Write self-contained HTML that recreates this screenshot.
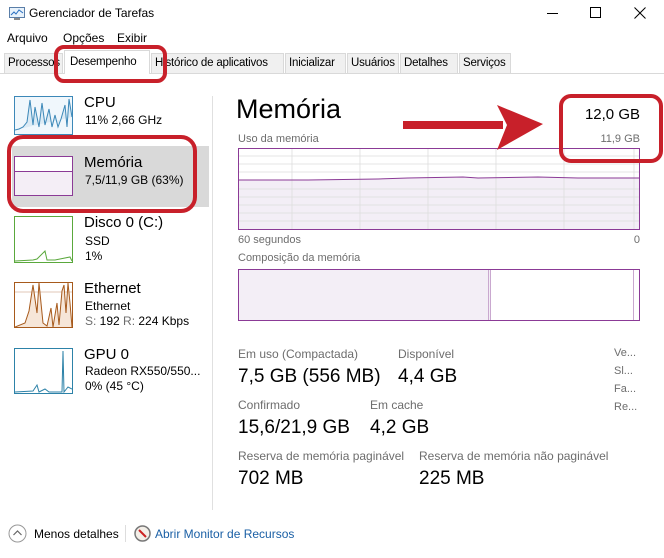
<!DOCTYPE html>
<html><head><meta charset="utf-8"><style>
*{margin:0;padding:0;box-sizing:border-box}
body{width:664px;height:558px;background:#fff;font-family:"Liberation Sans","DejaVu Sans",sans-serif;color:#000;position:relative;overflow:hidden;font-size:12px}
.a{position:absolute;white-space:nowrap}
.g{color:#6d6d6d}
.tab{position:absolute;top:53px;height:20px;border:1px solid #d9d9d9;border-bottom:none;background:#f0f0f0;font-size:11.5px;letter-spacing:-0.2px;padding:3px 0 0 3px;color:#000;overflow:hidden;white-space:nowrap}
.th{position:absolute;left:14px;width:59px;border:1px solid}
.big{font-size:19px}
.lbl{font-size:12px;color:#6d6d6d}
</style></head><body>
<!-- title -->
<svg class="a" style="left:8px;top:6px" width="18" height="15"><rect x="1.5" y="1.5" width="15" height="10" fill="#e8f2fb" stroke="#5a7ea8"/><polyline points="3,9 6,6 8,8 11,4 15,7" fill="none" stroke="#2a6fc0"/><rect x="6" y="12" width="6" height="2" fill="#888"/></svg>
<div class="a" style="left:29px;top:6px;font-size:12px">Gerenciador de Tarefas</div>
<div class="a" style="left:547px;top:13px;width:11px;height:1px;background:#000"></div>
<div class="a" style="left:590px;top:7px;width:11px;height:11px;border:1px solid #000"></div>
<svg class="a" style="left:634px;top:7px" width="12" height="12"><path d="M0.5 0.5L11.5 11.5M11.5 0.5L0.5 11.5" stroke="#000"/></svg>
<!-- menu -->
<div class="a" style="left:7px;top:31px">Arquivo</div>
<div class="a" style="left:63px;top:31px">Opções</div>
<div class="a" style="left:117px;top:31px">Exibir</div>
<!-- tabs -->
<div class="a" style="left:0;top:73px;width:664px;height:1px;background:#d9d9d9"></div>
<div class="tab" style="left:4px;width:59px">Processos</div>
<div class="tab" style="left:64px;width:86px;top:50px;height:24px;background:#fff;padding-top:5px;padding-left:5px">Desempenho</div>
<div class="tab" style="left:151px;width:133px">Histórico de aplicativos</div>
<div class="tab" style="left:285px;width:61px">Inicializar</div>
<div class="tab" style="left:347px;width:52px">Usuários</div>
<div class="tab" style="left:400px;width:58px">Detalhes</div>
<div class="tab" style="left:459px;width:52px">Serviços</div>
<!-- left panel -->
<div class="a" style="left:12px;top:146px;width:197px;height:61px;background:#d9d9d9"></div>
<div class="a" style="left:212px;top:96px;width:1px;height:414px;background:#e0e0e0"></div>
<svg class="th" style="top:96px;height:39px;border-color:#3c88b8;background:#f0f7fc" viewBox="0 0 57 37" preserveAspectRatio="none"><polyline points="0,33 4,32 8,30 12,25 15,3 18,28 20,10 24,30 27,6 30,28 34,12 37,30 40,18 43,30 46,22 50,8 52,30 54,2 57,20" fill="#dcebf5" stroke="#3c88b8"/></svg>
<div class="a" style="left:84px;top:94px;font-size:15px">CPU</div>
<div class="a" style="left:85px;top:113px">11% 2,66 GHz</div>
<div class="th" style="top:156px;height:40px;border-color:#8b3a96;background:#fff"><div style="position:absolute;left:0;right:0;top:14px;bottom:0;background:#f4eef6;border-top:1px solid #8b3a96"></div></div>
<div class="a" style="left:84px;top:154px;font-size:15px">Memória</div>
<div class="a" style="left:85px;top:173px">7,5/11,9 GB (63%)</div>
<svg class="th" style="top:216px;height:47px;border-color:#5aa83c" viewBox="0 0 57 45" preserveAspectRatio="none"><polyline points="0,44 18,43 22,42 30,34 32,43 40,43 55,40 57,44" fill="none" stroke="#5aa83c"/></svg>
<div class="a" style="left:84px;top:214px;font-size:15px">Disco 0 (C:)</div>
<div class="a" style="left:85px;top:234px">SSD</div>
<div class="a" style="left:85px;top:249px">1%</div>
<svg class="th" style="top:282px;height:46px;border-color:#a75a1c;background:#fff" viewBox="0 0 57 44" preserveAspectRatio="none"><line x1="0" y1="9" x2="57" y2="9" stroke="#c49070" stroke-width=".6"/><polyline points="0,44 10,40 14,28 18,2 22,30 24,0 28,40 32,43 36,25 38,44 42,20 44,42 47,8 49,2 51,30 53,0 55,20 57,44" fill="#f6e6d8" stroke="#a75a1c"/></svg>
<div class="a" style="left:84px;top:280px;font-size:15px">Ethernet</div>
<div class="a" style="left:85px;top:299px">Ethernet</div>
<div class="a" style="left:85px;top:314px"><span class="g">S:</span> 192 <span class="g">R:</span> 224 Kbps</div>
<svg class="th" style="top:348px;height:46px;border-color:#2d82a8" viewBox="0 0 57 44" preserveAspectRatio="none"><polyline points="0,43 18,42 22,36 24,43 30,40 34,43 47,43 48,2 49,43 53,38 57,40" fill="none" stroke="#2d82a8"/></svg>
<div class="a" style="left:84px;top:346px;font-size:15px">GPU 0</div>
<div class="a" style="left:85px;top:364px">Radeon RX550/550...</div>
<div class="a" style="left:85px;top:379px">0% (45 °C)</div>
<!-- right -->
<div class="a" style="left:236px;top:94px;font-size:27px">Memória</div>
<div class="a" style="right:24px;top:106px;font-size:15px">12,0 GB</div>
<div class="a lbl" style="left:238px;top:133px;font-size:11px">Uso da memória</div>
<div class="a lbl" style="right:24px;top:133px;font-size:11px">11,9 GB</div>
<svg class="a" style="left:238px;top:148px" width="402" height="82">
<rect x="0" y="0" width="402" height="82" fill="#fff"/>
<path d="M0 32 L70 32 L140 31 L170 30 L225 29 L240 30 L300 29 L340 30 L402 30 L402 82 L0 82Z" fill="#f3eef6"/>
<g stroke="#ddd" stroke-width=".8">
<line x1="0" y1="8" x2="402" y2="8"/><line x1="0" y1="16" x2="402" y2="16"/><line x1="0" y1="24" x2="402" y2="24"/><line x1="0" y1="41" x2="402" y2="41"/><line x1="0" y1="49" x2="402" y2="49"/><line x1="0" y1="57" x2="402" y2="57"/><line x1="0" y1="65" x2="402" y2="65"/><line x1="0" y1="73" x2="402" y2="73"/>
<line x1="54" y1="0" x2="54" y2="82"/><line x1="122" y1="0" x2="122" y2="82"/><line x1="190" y1="0" x2="190" y2="82"/><line x1="258" y1="0" x2="258" y2="82"/><line x1="326" y1="0" x2="326" y2="82"/><line x1="396" y1="0" x2="396" y2="82"/></g>
<polyline points="0,32 70,32 140,31 170,30 225,29 240,30 300,29 340,30 402,30" fill="none" stroke="#8b3a96"/>
<rect x=".5" y=".5" width="401" height="81" fill="none" stroke="#8b3a96"/></svg>
<div class="a lbl" style="left:238px;top:234px;font-size:11px">60 segundos</div>
<div class="a lbl" style="right:24px;top:234px;font-size:11px">0</div>
<div class="a lbl" style="left:238px;top:252px;font-size:11px">Composição da memória</div>
<div class="a" style="left:238px;top:269px;width:402px;height:52px;border:1px solid #8b3a96;background:#fff">
<div style="position:absolute;left:0;top:0;width:252px;height:50px;background:#f3eef6;border-right:3px double #c9a8cf"></div>
<div style="position:absolute;left:394px;top:0;width:1px;height:50px;background:#c9a8cf"></div></div>
<div class="a lbl" style="left:238px;top:347px">Em uso (Compactada)</div>
<div class="a lbl" style="left:398px;top:347px">Disponível</div>
<div class="a big" style="left:238px;top:366px">7,5 GB (556 MB)</div>
<div class="a big" style="left:398px;top:366px">4,4 GB</div>
<div class="a lbl" style="left:238px;top:398px">Confirmado</div>
<div class="a lbl" style="left:370px;top:398px">Em cache</div>
<div class="a big" style="left:238px;top:417px">15,6/21,9 GB</div>
<div class="a big" style="left:370px;top:417px">4,2 GB</div>
<div class="a lbl" style="left:238px;top:449px">Reserva de memória paginável</div>
<div class="a lbl" style="left:419px;top:449px">Reserva de memória não paginável</div>
<div class="a big" style="left:238px;top:468px">702 MB</div>
<div class="a big" style="left:419px;top:468px">225 MB</div>
<div class="a lbl" style="left:614px;top:347px;font-size:11px">Ve...</div>
<div class="a lbl" style="left:614px;top:365px;font-size:11px">Sl...</div>
<div class="a lbl" style="left:614px;top:383px;font-size:11px">Fa...</div>
<div class="a lbl" style="left:614px;top:401px;font-size:11px">Re...</div>
<!-- bottom -->
<svg class="a" style="left:8px;top:524px" width="19" height="19"><circle cx="9.5" cy="9.5" r="8.5" fill="#fff" stroke="#999"/><polyline points="5.5,11 9.5,7 13.5,11" fill="none" stroke="#666" stroke-width="1.2"/></svg>
<div class="a" style="left:34px;top:527px">Menos detalhes</div>
<div class="a" style="left:125px;top:525px;width:1px;height:17px;background:#ddd"></div>
<svg class="a" style="left:134px;top:525px" width="17" height="17"><circle cx="8.5" cy="8.5" r="7.5" fill="#f3efe8" stroke="#777" stroke-width="1.5"/><line x1="5" y1="5" x2="12" y2="12" stroke="#c22" stroke-width="2"/></svg>
<div class="a" style="left:155px;top:527px;color:#1a5fa5">Abrir Monitor de Recursos</div>
<!-- annotations -->
<svg class="a" style="left:0;top:0" width="664" height="558">
<g fill="none" stroke="#c8202a" stroke-width="4">
<rect x="56" y="47" width="109" height="34" rx="8"/>
<rect x="9" y="137" width="186" height="74" rx="14"/>
<rect x="561" y="96" width="100" height="65" rx="10"/></g>
<rect x="403" y="121" width="100" height="8" fill="#c8202a"/>
<polygon points="497,105 543,124 497,150 507,125" fill="#c8202a"/>
</svg>
</body></html>
